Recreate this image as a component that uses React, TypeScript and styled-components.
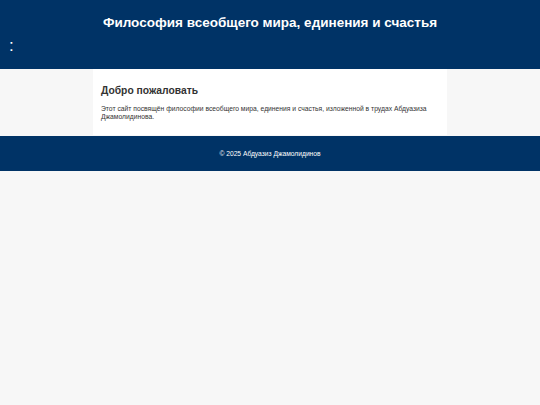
import * as React from 'react';
import styled, { createGlobalStyle } from 'styled-components';

const GlobalStyle = createGlobalStyle`
  html, body {
    margin: 0;
    padding: 0;
    background: #f7f7f7;
    font-family: "Liberation Sans", Arial, sans-serif;
  }
`;

const Header = styled.header`
  background-color: #003366;
  color: #ffffff;
  height: 69px;
  padding: 14px 0 0;
  box-sizing: border-box;
`;

const Title = styled.h1`
  margin: 0;
  font-size: 13.5px;
  font-weight: bold;
  text-align: center;
  line-height: 18px;
`;

const Nav = styled.nav`
  padding: 4px 0 0 9px;
  font-size: 17px;
  line-height: 20px;
`;

const Main = styled.main`
  width: 354px;
  margin: 0 auto;
  background: #ffffff;
  padding: 15px 8px 14px;
  box-sizing: border-box;
  min-height: 66px;
`;

const Heading = styled.h2`
  margin: 0 0 7px;
  font-size: 10.3px;
  line-height: 14px;
  color: #333333;
`;

const Text = styled.p`
  margin: 0;
  font-size: 6.75px;
  line-height: 8px;
  color: #333333;
`;

const Footer = styled.footer`
  background-color: #003366;
  color: #ffffff;
  height: 35px;
  margin-top: 1px;
  display: flex;
  align-items: center;
  justify-content: center;
  font-size: 6.7px;
`;

export default function App() {
  return (
    <>
      <GlobalStyle />
      <Header>
        <Title>Философия всеобщего мира, единения и счастья</Title>
        <Nav>:</Nav>
      </Header>
      <Main>
        <Heading>Добро пожаловать</Heading>
        <Text>
          Этот сайт посвящён философии всеобщего мира, единения и счастья, изложенной в трудах Абдуазиза
          Джамолидинова.
        </Text>
      </Main>
      <Footer>© 2025 Абдуазиз Джамолидинов</Footer>
    </>
  );
}
